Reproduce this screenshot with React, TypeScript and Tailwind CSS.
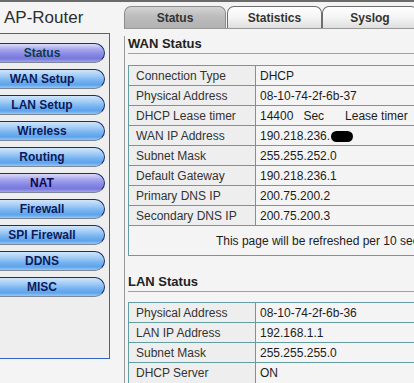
import React from "react";

const navItems = [
  { label: "Status", active: true, color: "text-[#0d3b4a]" },
  { label: "WAN Setup" },
  { label: "LAN Setup" },
  { label: "Wireless" },
  { label: "Routing" },
  { label: "NAT", active: true, color: "text-[#0b0b50]" },
  { label: "Firewall" },
  { label: "SPI Firewall" },
  { label: "DDNS" },
  { label: "MISC" },
];

function NavButton({ label, active, color }: { label: string; active?: boolean; color?: string }) {
  return (
    <div
      className={
        "h-[20px] shrink-0 rounded-r-[10px] border border-[#1b2f6c] border-b-[#7d8796] flex items-center justify-center text-[12px] font-bold leading-none " +
        (active
          ? "bg-[linear-gradient(to_bottom,#dcdcf8_0%,#a6a6ee_30%,#8686e4_60%,#7878dd_82%,#a2a2ec_100%)] " + (color ?? "")
          : "bg-[linear-gradient(to_bottom,#cfe6fc_0%,#a4cdf6_30%,#74b2f0_60%,#5ea3eb_82%,#92c8f6_100%)] text-[#0c1a5c]")
      }
    >
      {label}
    </div>
  );
}

type Row = { label: string; value: React.ReactNode };

function InfoTable({ rows, footer }: { rows: Row[]; footer?: string }) {
  return (
    <div className="w-[408px] border border-[#639fa0]">
      {rows.map((r, i) => {
        const last = i === rows.length - 1 && !footer;
        return (
          <div
            key={r.label}
            className={"flex h-[20px] " + (last ? "h-[19px]" : "border-b border-[#639fa0]")}
          >
            <div className="w-[127px] shrink-0 border-r border-[#639fa0] bg-[#eeeeee] pl-[7px] flex items-center text-[#333333]">
              {r.label}
            </div>
            <div className="flex-1 bg-[#f4f4f4] pl-[4px] flex items-center text-[#1c1c1c] whitespace-nowrap">
              {r.value}
            </div>
          </div>
        );
      })}
      {footer && (
        <div className="h-[29px] flex items-center justify-center text-[#1c1c1c] whitespace-nowrap bg-[#f4f4f4]">
          {footer}
        </div>
      )}
    </div>
  );
}

export default function App() {
  const wanRows: Row[] = [
    { label: "Connection Type", value: "DHCP" },
    { label: "Physical Address", value: "08-10-74-2f-6b-37" },
    {
      label: "DHCP Lease timer",
      value: (
        <>
          <span>14400</span>
          <span className="ml-[10px]">Sec</span>
          <span className="ml-[21px]">Lease timer</span>
        </>
      ),
    },
    {
      label: "WAN IP Address",
      value: (
        <>
          <span>190.218.236.</span>
          <span className="ml-[1px] mt-[2px] inline-block w-[22px] h-[11px] rounded-full bg-black" />
        </>
      ),
    },
    { label: "Subnet Mask", value: "255.255.252.0" },
    { label: "Default Gateway", value: "190.218.236.1" },
    { label: "Primary DNS IP", value: "200.75.200.2" },
    { label: "Secondary DNS IP", value: "200.75.200.3" },
  ];

  const lanRows: Row[] = [
    { label: "Physical Address", value: "08-10-74-2f-6b-36" },
    { label: "LAN IP Address", value: "192.168.1.1" },
    { label: "Subnet Mask", value: "255.255.255.0" },
    { label: "DHCP Server", value: "ON" },
  ];

  return (
    <div
      className="w-[414px] h-[383px] overflow-hidden bg-[#f4f4f4] text-[12px]"
      style={{ fontFamily: '"Liberation Sans", Arial, sans-serif' }}
    >
      <div className="h-[2px] bg-[#6b6b6b]" />
      <div className="flex">
        {/* Left column */}
        <div className="w-[124px] shrink-0">
          <div className="mt-[6px] h-[20px] leading-[20px] text-[17px] pl-[4px] text-[#2e2e2e] whitespace-nowrap">
            AP-Router
          </div>
          <div className="mt-[5px] -ml-[25px] w-[135px] h-[326px] border border-[#3363c4] bg-[#eeeeee] pt-[9px] pl-[3px] pr-[4px] flex flex-col gap-[6px]">
            {navItems.map((n) => (
              <NavButton key={n.label} label={n.label} active={n.active} color={n.color} />
            ))}
          </div>
        </div>

        {/* Right column */}
        <div className="flex-1 min-w-0">
          <div className="mt-[4px] h-[23px] flex items-end border-b border-[#999999] whitespace-nowrap">
            <div className="w-[102px] h-[22px] shrink-0 rounded-t-[7px] border border-b-0 border-[#8c8c8c] bg-[linear-gradient(to_bottom,#d4d4d4_0%,#bcbcbc_45%,#b2b2b2_100%)] flex items-center justify-center font-bold text-[#333333]">
              Status
            </div>
            <div className="ml-[1px] w-[95px] h-[22px] shrink-0 rounded-t-[7px] border border-b-0 border-[#6e6e6e] bg-[linear-gradient(to_bottom,#ffffff_0%,#f4f4f4_50%,#dedede_100%)] flex items-center justify-center font-bold text-[#333333]">
              Statistics
            </div>
            <div className="w-[96px] h-[22px] shrink-0 rounded-t-[7px] border border-b-0 border-[#6e6e6e] bg-[linear-gradient(to_bottom,#ffffff_0%,#f4f4f4_50%,#dedede_100%)] flex items-center justify-center font-bold text-[#333333]">
              Syslog
            </div>
          </div>

          <div className="border-l border-[#999999] pl-[3px] h-[400px]">
            <div className="mt-[7px] h-[18px] leading-[16px] text-[13px] font-bold text-[#222222] border-b border-[#a0a0a0] whitespace-nowrap">
              WAN Status
            </div>
            <div className="mt-[11px]">
              <InfoTable rows={wanRows} footer="This page will be refreshed per 10 seconds." />
            </div>

            <div className="mt-[18px] h-[18px] leading-[16px] text-[13px] font-bold text-[#222222] border-b border-[#a0a0a0] whitespace-nowrap">
              LAN Status
            </div>
            <div className="mt-[10px]">
              <InfoTable rows={lanRows} />
            </div>
          </div>
        </div>
      </div>
    </div>
  );
}
